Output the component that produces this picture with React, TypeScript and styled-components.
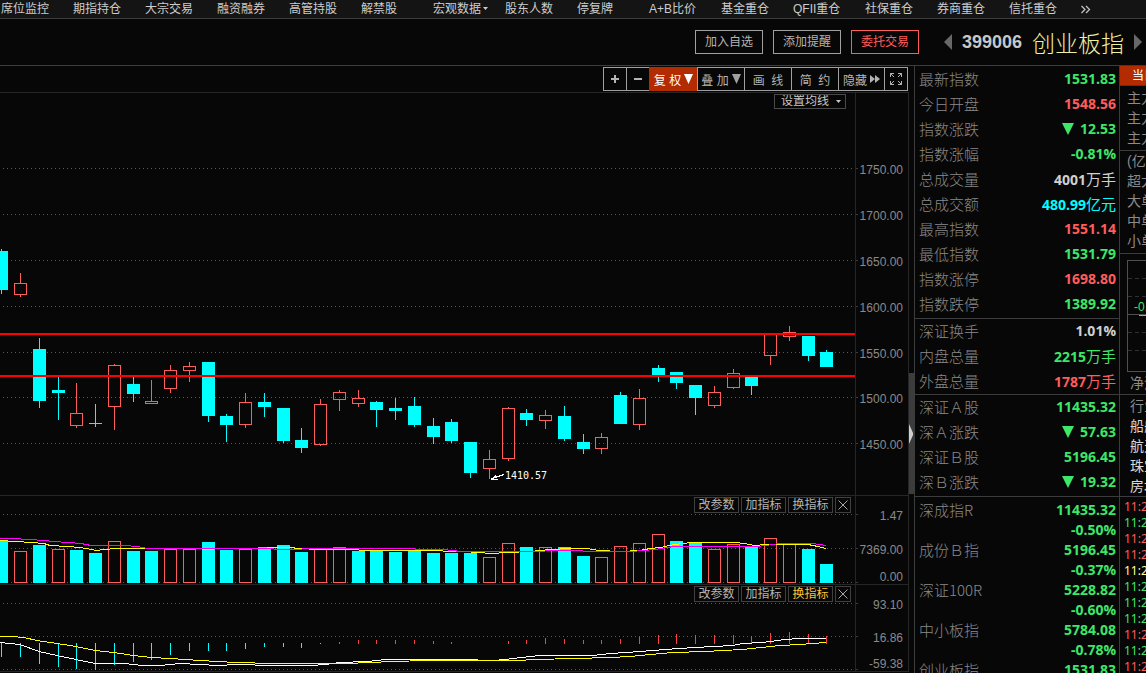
import React from "react";
import styled, { createGlobalStyle } from "styled-components";

const UP = "#ff5c5c";
const DOWN = "#3ee66a";
const CYAN = "#00ffff";
const LINE = "#3c3c3c";
const FAINT = "#262626";

const GlobalStyle = createGlobalStyle`
  * { box-sizing: border-box; }
  html, body { margin: 0; background: #070707; }
  body, button, select {
    font-family: "Liberation Sans", "Noto Sans CJK SC", sans-serif;
    font-size: 12px;
  }
  button, select { margin: 0; padding: 0; cursor: pointer; white-space: pre; }
  a { color: inherit; text-decoration: none; }
`;

const Page = styled.div`
  height: 100vh;
  overflow: hidden;
  color: #c8c8c8;
  display: flex;
  flex-direction: column;
`;

const Nav = styled.nav`
  flex: none;
  height: 19px;
  overflow: hidden;
  display: grid;
  grid-template-columns: repeat(15, 72px) 1fr;
  padding-left: 1px;
  background: #141414;
  border-bottom: 1px solid ${LINE};
`;

const NavLink = styled.a`
  line-height: 16px;
  white-space: nowrap;
  color: #cccccc;
  display: flex;
  align-items: center;
`;

const Header = styled.header`
  flex: none;
  height: 47px;
  display: flex;
  align-items: center;
  justify-content: flex-end;
  padding-right: 3px;
  border-bottom: 1px solid ${LINE};
`;

const Actions = styled.div`
  display: flex;
  gap: 10px;
  margin-right: 24px;
`;

const ActionButton = styled.button<{ $accent?: boolean }>`
  width: 68px;
  height: 24px;
  line-height: 22px;
  background: transparent;
  color: ${(p) => (p.$accent ? UP : "#b4b4b4")};
  border: 1px solid ${(p) => (p.$accent ? UP : "#a0a0a0")};
`;

const Stock = styled.div`
  display: flex;
  align-items: center;
  gap: 10px;
`;

const IconButton = styled.button`
  display: flex;
  border: 0;
  background: none;
`;

const Code = styled.strong`
  font-size: 18px;
  line-height: 24px;
  color: #c8c8c8;
`;

const Name = styled.h1`
  margin: 0;
  font-family: "Noto Sans CJK SC", sans-serif;
  font-size: 23px;
  font-weight: 300;
  line-height: 30px;
  color: #f2efa0;
`;

const Body = styled.main`
  flex: 1;
  min-height: 0;
  display: grid;
  grid-template-columns: minmax(0, 1fr) 5px 206px 26px;
`;

const Column = styled.section`
  min-width: 0;
  overflow: hidden;
`;

const Toolbar = styled.div`
  display: flex;
  justify-content: flex-end;
  padding: 1px 1px 1px 0;
  border-bottom: 1px solid ${FAINT};
`;

const ToolButton = styled.button<{ $w: number; $active?: boolean }>`
  width: ${(p) => p.$w}px;
  height: 24px;
  display: flex;
  align-items: center;
  justify-content: center;
  gap: 3px;
  color: ${(p) => (p.$active ? "#ffffff" : "#b4b4b4")};
  background: ${(p) => (p.$active ? "#b32b00" : "transparent")};
  border: 1px solid #a0a0a0;
  border-color: ${(p) => (p.$active ? "#b32b00" : "#a0a0a0")};
  border-right-width: 0;
  &:last-child { border-right-width: 1px; }
`;

const Pane = styled.div`
  position: relative;
  border-right: 1px solid ${FAINT};
  border-bottom: 1px solid ${FAINT};
`;

const Plot = styled.svg<{ $h: number }>`
  display: block;
  width: 100%;
  height: ${(p) => p.$h}px;
`;

const AverageSelect = styled.label`
  position: absolute;
  top: 1px;
  right: 62px;
  display: flex;
  align-items: center;
  width: 72px;
  height: 15px;
  padding-right: 4px;
  border: 1px solid #4a4a4a;
  background: #070707;
  select {
    appearance: none;
    flex: 1;
    border: 0;
    padding-left: 6px;
    line-height: 13px;
    background: transparent;
    color: #c8c8c8;
  }
`;

const PaneTools = styled.div`
  position: absolute;
  top: 1px;
  right: 57px;
  display: flex;
  gap: 2px;
`;

const PaneButton = styled.button<{ $active?: boolean; $icon?: boolean }>`
  width: ${(p) => (p.$icon ? 16 : 45)}px;
  height: 16px;
  display: flex;
  align-items: center;
  justify-content: center;
  line-height: 16px;
  border: 1px solid #404040;
  background: #070707;
  color: ${(p) => (p.$active ? "#ffc232" : "#b4b4b4")};
`;

const Rail = styled.div`
  height: 495px;
  padding-top: 307px;
  display: flex;
  flex-direction: column;
  overflow: hidden;
`;

const RailThumb = styled.button`
  flex: none;
  display: flex;
  align-items: center;
  width: 5px;
  height: 121px;
  border: 0;
  background: ${LINE};
`;

const Quotes = styled(Column)`
  border-left: 1px solid ${LINE};
  border-right: 1px solid ${LINE};
`;

const QuoteGroup = styled.dl<{ $top?: number; $bottom?: number }>`
  margin: 0;
  padding: ${(p) => p.$top ?? 0}px 3px ${(p) => p.$bottom ?? 0}px 4px;
  border-bottom: 1px solid ${LINE};
`;

const QuoteRow = styled.div<{ $h: number }>`
  display: flex;
  justify-content: space-between;
  align-items: flex-start;
  height: ${(p) => p.$h}px;
  line-height: ${(p) => (p.$h > 20 ? p.$h - 2 : p.$h)}px;
`;

const Label = styled.dt`
  font-family: "Noto Sans CJK SC", sans-serif;
  font-size: 15px;
  font-weight: 300;
  color: #8a8a8a;
`;

const Value = styled.dd<{ $c: string }>`
  margin: 0;
  display: flex;
  align-items: center;
  gap: 6px;
  font-family: "Open Sans", "Noto Sans CJK SC", sans-serif;
  font-size: 14px;
  font-weight: 700;
  color: ${(p) => p.$c};
`;

const Unit = styled.span`
  font-family: "Noto Sans CJK SC", sans-serif;
  font-size: 15px;
  font-weight: 400;
`;

const Flow = styled(Column)`
  white-space: nowrap;
`;

const FlowTab = styled.button`
  display: block;
  width: 60px;
  height: 20px;
  padding-left: 12px;
  margin-bottom: 2px;
  text-align: left;
  line-height: 18px;
  border: 0;
  border-bottom: 1px solid ${LINE};
  background: #b32b00;
  color: #ffffff;
`;

const FlowGroup = styled.div<{ $h: number; $top?: number }>`
  height: ${(p) => p.$h}px;
  padding-left: 7px;
  padding-top: ${(p) => p.$top ?? 0}px;
  border-bottom: 1px solid ${LINE};
`;

const FlowText = styled.div<{ $bright?: boolean; $indent?: boolean }>`
  height: 20px;
  line-height: 20px;
  font-size: 14px;
  color: ${(p) => (p.$bright ? "#d8d8d8" : "#8a8a8a")};
  padding-left: ${(p) => (p.$bright || p.$indent ? 3 : 0)}px;
`;

const FlowChart = styled.svg`
  display: block;
`;

const Times = styled.ol`
  margin: 0;
  padding: 2px 0 0 4px;
  list-style: none;
`;

const Time = styled.li<{ $c: string }>`
  height: 16px;
  line-height: 16px;
  font-size: 12px;
  font-family: "Noto Sans", sans-serif;
  color: ${(p) => p.$c};
`;

const navItems = [
  "席位监控", "期指持仓", "大宗交易", "融资融券", "高管持股", "解禁股", "宏观数据", "股东人数",
  "停复牌", "A+B比价", "基金重仓", "QFII重仓", "社保重仓", "券商重仓", "信托重仓",
];

type Candle = [up: 0 | 1, high: number, top: number, bottom: number, low: number];

// One entry per trading day: direction, upper wick, body top, body bottom, lower wick.
const candles: Candle[] = [
  [0, 249, 251, 290, 294], [1, 273, 283, 295, 297], [0, 338, 349, 401, 408], [0, 377, 390, 393, 420],
  [1, 383, 413, 426, 428], [0, 404, 423, 424, 427], [1, 364, 365, 407, 430], [0, 376, 384, 394, 402],
  [1, 380, 401, 404, 404], [1, 365, 370, 389, 393], [1, 362, 366, 371, 382], [0, 362, 362, 416, 422],
  [0, 414, 416, 425, 442], [1, 393, 402, 425, 428], [0, 393, 402, 407, 417], [0, 408, 408, 441, 443],
  [0, 428, 440, 448, 453], [1, 399, 404, 445, 446], [1, 390, 392, 400, 411], [1, 390, 398, 404, 407],
  [0, 401, 402, 410, 427], [0, 398, 408, 411, 420], [0, 397, 406, 425, 427], [0, 418, 426, 437, 444],
  [0, 419, 422, 441, 443], [0, 442, 442, 473, 478], [1, 450, 459, 469, 479], [1, 407, 408, 459, 461],
  [0, 409, 413, 420, 426], [1, 410, 415, 421, 429], [0, 406, 416, 439, 441], [0, 434, 442, 449, 454],
  [1, 433, 437, 449, 454], [0, 392, 395, 424, 424], [1, 389, 398, 425, 430], [0, 365, 368, 376, 382],
  [0, 372, 372, 383, 389], [0, 385, 385, 398, 415], [1, 386, 392, 406, 408], [1, 369, 373, 388, 389],
  [0, 376, 376, 386, 395], [1, 334, 334, 356, 365], [1, 326, 332, 337, 341], [0, 336, 336, 356, 361],
  [0, 350, 352, 367, 367],
];

// Positive tops are rising volume (hollow), negative are falling (solid).
const volumes = [
  -540, 551, -545, 549, -550, -553, 541, -551, -551, 549, 549, -542, -550, 549, -547, -545, -552, 549,
  547, -551, -551, -552, -550, -553, -553, -553, 557, 543, -547, 547, -547, -556, 557, 546, 543, 534,
  -541, -542, 549, 544, -547, 538, 544, -549, -564,
];

const momentum = [
  657, 657, 664, 667, 669, 670, 665, 662, 660, 655, 651, 651, 651, 649, 647, 647, 648, 644, 642, 640,
  640, 640, 640, 641, 642, 0, 0, 641, 640, 638, 639, 640, 640, 639, 637, 635, 634, 635, 635, 635, 636,
  633, 632, 634, 636,
];

const center = (i: number) => Math.floor(1.8 + 18.75 * i);

const fastMA =
  "0,540 16,541 32,542 44,543 50,545 68,546 80,547 92,549 96,550 104,549 116,548 180,548 198,548 206,549 222,548 254,548 280,547 292,547 297,548 320,549 349,549 368,550 424,550 461,551 480,552 490,553 508,552 530,551 550,549 570,548 587,548 599,550 620,551 640,550 650,548 661,547 669,545 683,543 691,542 736,542 744,543 755,545 766,544 808,544 818,546 826,548";
const slowMA =
  "0,538 11,538 30,539 44,540 54,541 68,542 81,543 91,545 124,545 138,546 147,548 199,548 255,548 293,549 311,548 386,548 443,549 461,551 536,551 555,550 574,550 592,551 630,551 644,550 654,549 663,548 673,546 756,546 766,545 780,543 812,543 826,545";
const dea =
  "0,636 11,636 24,637 37,640 57,643 76,646 95,650 114,652 133,655 151,657 170,658 200,660 236,662 274,663 350,663 367,662 424,660 517,660 536,659 574,658 611,657 630,656 640,655 673,652 705,651 742,649 761,647 780,645 800,644 813,643 826,642";
const dif =
  "0,642 20,644 39,651 57,655 76,659 95,663 124,663 143,665 160,665 180,663 199,664 218,665 236,664 274,665 311,665 325,664 340,662 367,661 386,659 461,659 494,660 505,659 530,656 541,655 592,655 611,653 640,651 665,649 695,647 733,645 742,643 762,642 770,641 785,639 800,638 826,638";

function Grid({ rows }: { rows: number[] }) {
  return (
    <g>
      {rows.map((y) => (
        <g key={y}>
          <line x1="3" x2="854" y1={y + 0.5} y2={y + 0.5} stroke="#585858" strokeDasharray="1 3" />
          <line x1="856" x2="858" y1={y + 0.5} y2={y + 0.5} stroke={LINE} />
        </g>
      ))}
    </g>
  );
}

function Scale({ labels }: { labels: [string, number][] }) {
  return (
    <g fill="#8a8a8a" fontSize="12" textAnchor="end">
      {labels.map(([t, y]) => (
        <text key={t} x="903" y={y}>{t}</text>
      ))}
    </g>
  );
}

function Block({ i, up, top, bottom }: { i: number; up: boolean; top: number; bottom: number }) {
  const x = center(i) - 6;
  return up ? (
    <rect x={x + 0.5} y={top + 0.5} width="12" height={bottom - top - 1} fill="none" stroke={UP} />
  ) : (
    <rect x={x} y={top} width="13" height={bottom - top} fill={CYAN} />
  );
}

function PaneMenu({ highlight }: { highlight?: boolean }) {
  return (
    <PaneTools>
      <PaneButton>改参数</PaneButton>
      <PaneButton>加指标</PaneButton>
      <PaneButton $active={highlight}>换指标</PaneButton>
      <PaneButton $icon aria-label="关闭">
        <svg width="10" height="10" viewBox="0 0 10 10">
          <path d="M0.5 0.5L9.5 9.5M9.5 0.5L0.5 9.5" stroke="#a8a8a8" />
        </svg>
      </PaneButton>
    </PaneTools>
  );
}

const Down = ({ w, h, c }: { w: number; h: number; c: string }) => (
  <svg width={w} height={h} viewBox="0 0 10 10" preserveAspectRatio="none">
    <path d="M0 0H10L5 10Z" fill={c} />
  </svg>
);

type Quote = { label: string; value: string; color: string; unit?: string; arrow?: boolean };
const q = (label: string, value: string, color: string, unit?: string, arrow?: boolean): Quote => ({
  label, value, color, unit, arrow,
});

const quoteGroups: { rows: Quote[]; top: number; bottom: number }[] = [
  {
    top: 1,
    bottom: 1,
    rows: [
      q("最新指数", "1531.83", DOWN), q("今日开盘", "1548.56", UP), q("指数涨跌", "12.53", DOWN, "", true),
      q("指数涨幅", "-0.81%", DOWN), q("总成交量", "4001", "#d0d0d0", "万手"),
      q("总成交额", "480.99", CYAN, "亿元"), q("最高指数", "1551.14", UP), q("最低指数", "1531.79", DOWN),
      q("指数涨停", "1698.80", UP), q("指数跌停", "1389.92", DOWN),
    ],
  },
  {
    top: 0,
    bottom: 0,
    rows: [
      q("深证换手", "1.01%", "#d0d0d0"), q("内盘总量", "2215", DOWN, "万手"), q("外盘总量", "1787", UP, "万手"),
    ],
  },
  {
    top: 0,
    bottom: 1,
    rows: [
      q("深证Ａ股", "11435.32", DOWN), q("深Ａ涨跌", "57.63", DOWN, "", true),
      q("深证Ｂ股", "5196.45", DOWN), q("深Ｂ涨跌", "19.32", DOWN, "", true),
    ],
  },
];

const indices = [
  ["深成指R", "11435.32"], ["", "-0.50%"], ["成份Ｂ指", "5196.45"], ["", "-0.37%"], ["深证100R", "5228.82"],
  ["", "-0.60%"], ["中小板指", "5784.08"], ["", "-0.78%"], ["创业板指", "1531.83"],
];

const times = [UP, DOWN, UP, UP, "#ffff9c", DOWN, DOWN, DOWN, UP, DOWN, UP];

export default function App() {
  return (
    <Page>
      <GlobalStyle />
      <Nav>
        {navItems.map((t) => (
          <NavLink href="#" key={t}>
            {t}
            {t === "宏观数据" && (
              <svg width="8" height="4" viewBox="0 0 8 4"><path d="M2 0H7L4.500 3Z" fill="#ccc" /></svg>
            )}
          </NavLink>
        ))}
        <NavLink href="#" aria-label="更多">
          <svg width="10" height="9" viewBox="0 0 10 9">
            <path d="M0.500 1L4 4.500L0.500 8M5 1L8.500 4.500L5 8" fill="none" stroke="#c0c0c0" strokeWidth="1.3" />
          </svg>
        </NavLink>
      </Nav>
      <Header>
        <Actions>
          <ActionButton>加入自选</ActionButton>
          <ActionButton>添加提醒</ActionButton>
          <ActionButton $accent>委托交易</ActionButton>
        </Actions>
        <Stock>
          <IconButton aria-label="上一个">
            <svg width="9" height="16" viewBox="0 0 9 16"><path d="M9 0V16L1 8Z" fill="#686868" /></svg>
          </IconButton>
          <Code>399006</Code>
          <Name>创业板指</Name>
          <IconButton aria-label="下一个">
            <svg width="9" height="16" viewBox="0 0 9 16"><path d="M0 0V16L8 8Z" fill="#686868" /></svg>
          </IconButton>
        </Stock>
      </Header>
      <Body>
        <Column>
          <Toolbar>
            <ToolButton $w={23} aria-label="放大">
              <svg width="8" height="8" viewBox="0 0 8 8"><path d="M4 0V8M0 4H8" stroke="#b4b4b4" strokeWidth="2" /></svg>
            </ToolButton>
            <ToolButton $w={23} aria-label="缩小">
              <svg width="8" height="8" viewBox="0 0 8 8"><path d="M0 4H8" stroke="#b4b4b4" strokeWidth="2" /></svg>
            </ToolButton>
            <ToolButton $w={48} $active>复 权<Down w={9} h={10} c="#fff" /></ToolButton>
            <ToolButton $w={47}>叠 加<Down w={9} h={10} c="#a0a0a0" /></ToolButton>
            <ToolButton $w={47}>{"画  线"}</ToolButton>
            <ToolButton $w={47}>{"简  约"}</ToolButton>
            <ToolButton $w={46}>
              隐藏
              <svg width="10" height="8" viewBox="0 0 10 8"><path d="M0 0L5 4L0 8ZM5 0L10 4L5 8Z" fill="#b4b4b4" /></svg>
            </ToolButton>
            <ToolButton $w={24} aria-label="全屏">
              <svg width="12" height="12" viewBox="0 0 12 12">
                <path
                  d="M0.500 4V0.500H4M8 0.500H11.500V4M11.500 8V11.500H8M4 11.500H0.500V8M0.500 0.500L4 4M11.500 0.500L8 4M11.500 11.500L8 8M0.500 11.500L4 8"
                  fill="none" stroke="#b4b4b4"
                />
              </svg>
            </ToolButton>
          </Toolbar>

          <Pane>
            <Plot $h={402} viewBox="0 93 908 402" preserveAspectRatio="xMaxYMin meet" shapeRendering="crispEdges">
              <Grid rows={[168, 214, 260, 306, 352, 397, 443]} />
              <line x1="855.5" x2="855.5" y1="93" y2="495" stroke={FAINT} />
              {candles.map(([up, high, top, bottom, low], i) => {
                const x = center(i) + 0.5;
                return (
                  <g key={i}>
                    <path d={`M${x} ${high}V${top}M${x} ${bottom}V${low}`} stroke={up ? UP : CYAN} />
                    <Block i={i} up={!!up} top={top} bottom={bottom} />
                  </g>
                );
              })}
              <path d="M0 334H855M0 376H855" stroke="#ff0000" strokeWidth="2" />
              <path d="M504 474.500L492 478.500M491 479.500L496 475.500M491 479.500H498" stroke="#fff" fill="none" />
              <text x="505" y="479" fill="#fff" fontSize="10" fontFamily="DejaVu Sans Mono, monospace">1410.57</text>
              <Scale
                labels={[
                  ["1750.00", 174], ["1700.00", 220], ["1650.00", 266], ["1600.00", 312], ["1550.00", 358],
                  ["1500.00", 403], ["1450.00", 449],
                ]}
              />
            </Plot>
            <AverageSelect>
              <select aria-label="设置均线"><option>设置均线</option></select>
              <svg width="5" height="3" viewBox="0 0 5 3"><path d="M0 0H5L2.500 3Z" fill="#c8c8c8" /></svg>
            </AverageSelect>
          </Pane>

          <Pane>
            <Plot $h={88} viewBox="0 496 908 88" preserveAspectRatio="xMaxYMin meet" shapeRendering="crispEdges">
              <Grid rows={[514, 548, 582]} />
              <line x1="855.5" x2="855.5" y1="496" y2="584" stroke={FAINT} />
              {volumes.map((v, i) => (
                <Block key={i} i={i} up={v > 0} top={Math.abs(v)} bottom={583} />
              ))}
              <g fill="none" transform="translate(0 0.5)">
                <polyline points={fastMA} stroke="#ffff00" />
                <polyline points={slowMA} stroke="#ff00ff" />
              </g>
              <Scale labels={[["1.47", 520], ["7369.00", 554], ["0.00", 581]]} />
            </Plot>
            <PaneMenu />
          </Pane>

          <Pane>
            <Plot $h={86} viewBox="0 585 908 86" preserveAspectRatio="xMaxYMin meet" shapeRendering="crispEdges">
              <Grid rows={[603, 636, 669]} />
              <line x1="855.5" x2="855.5" y1="585" y2="671" stroke={FAINT} />
              {momentum.map((v, i) =>
                v === 0 ? null : (
                  <line
                    key={i} x1={center(i) + 0.5} x2={center(i) + 0.5} y1={i < 18 ? 643 : 644} y2={v}
                    stroke={i < 18 ? CYAN : "#ff4040"}
                  />
                ),
              )}
              <g fill="none" transform="translate(0 0.5)">
                <polyline points={dif} stroke="#ffffff" />
                <polyline points={dea} stroke="#ffff00" />
              </g>
              <Scale labels={[["93.10", 609], ["16.86", 642], ["-59.38", 668]]} />
            </Plot>
            <PaneMenu highlight />
          </Pane>
        </Column>

        <Rail>
          <RailThumb aria-label="收起侧栏">
            <svg width="4" height="20" viewBox="0 0 4 20"><path d="M0 0L4 9V11L0 20Z" fill="#d0d0d0" /></svg>
          </RailThumb>
        </Rail>

        <Quotes>
          {quoteGroups.map((g, n) => (
            <QuoteGroup key={n} $top={g.top} $bottom={g.bottom}>
              {g.rows.map((r) => (
                <QuoteRow $h={25} key={r.label}>
                  <Label>{r.label}</Label>
                  <Value $c={r.color}>
                    {r.arrow && <Down w={12} h={12} c={DOWN} />}
                    <span>{r.value}{r.unit && <Unit>{r.unit}</Unit>}</span>
                  </Value>
                </QuoteRow>
              ))}
            </QuoteGroup>
          ))}
          <QuoteGroup $top={3}>
            {indices.map(([label, value], i) => (
              <QuoteRow $h={20} key={i}>
                <Label>{label}</Label>
                <Value $c={DOWN}>{value}</Value>
              </QuoteRow>
            ))}
          </QuoteGroup>
        </Quotes>

        <Flow>
          <FlowTab>当日</FlowTab>
          <FlowGroup $h={63}>
            <FlowText>主力</FlowText>
            <FlowText>主力</FlowText>
            <FlowText>主力</FlowText>
          </FlowGroup>
          <FlowGroup $h={103}>
            <FlowText>(亿元)</FlowText>
            <FlowText>超大单</FlowText>
            <FlowText>大单</FlowText>
            <FlowText>中单</FlowText>
            <FlowText>小单</FlowText>
          </FlowGroup>
          <FlowGroup $h={141}>
            <FlowChart width="60" height="119" viewBox="0 0 60 119" shapeRendering="crispEdges">
              <path d="M60 6.500H0.500V117.500H60M0 60.500H60" fill="none" stroke="#505050" />
              <path d="M1 24.500H60M1 42.500H60M1 78.500H60M1 96.500H60" stroke="#303030" strokeDasharray="4 3" />
              <path d="M12 61.500H60" stroke={DOWN} />
              <text x="7" y="57" fill={DOWN} fontSize="12">-0.5</text>
            </FlowChart>
            <FlowText $indent>净流</FlowText>
          </FlowGroup>
          <FlowGroup $h={102} $top={1}>
            <FlowText $indent>行业</FlowText>
            {["船舶", "航天", "珠宝", "房地"].map((t) => (
              <FlowText $bright key={t}>{t}</FlowText>
            ))}
          </FlowGroup>
          <Times>
            {times.map((c, i) => (
              <Time $c={c} key={i}>11:2</Time>
            ))}
          </Times>
        </Flow>
      </Body>
    </Page>
  );
}
